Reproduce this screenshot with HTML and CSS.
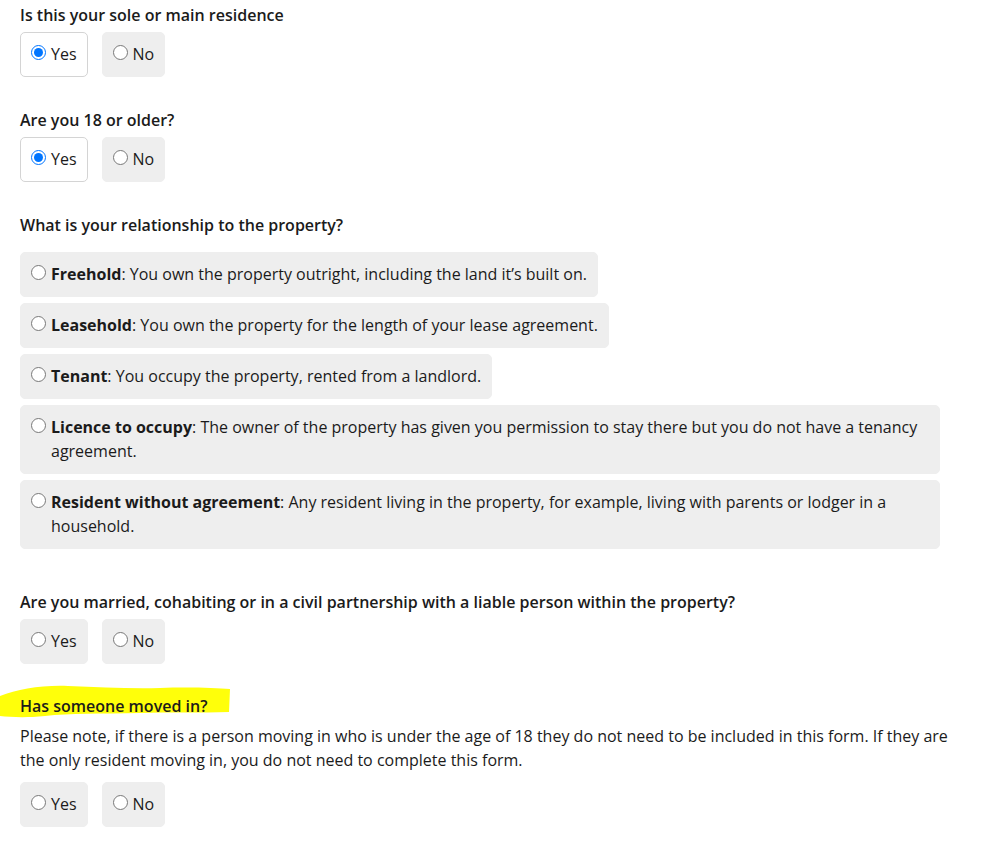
FILE: index.html
```html
<!DOCTYPE html>
<html lang="en">
<head>
    <meta charset="UTF-8">
    <meta name="viewport" content="width=device-width, initial-scale=1.0">
    <title>Resident details</title>
    <link rel="stylesheet" href="styles.css">
</head>
<body>
<form class="page">

    <!-- sole residence -->
    <fieldset class="question">
        <legend class="question-title">Is this your sole or main residence</legend>
        <div class="choices">
            <label class="choice selected"><input type="radio" name="sole" checked><span>Yes</span></label>
            <label class="choice"><input type="radio" name="sole"><span>No</span></label>
        </div>
    </fieldset>

    <!-- age -->
    <fieldset class="question">
        <legend class="question-title">Are you 18 or older?</legend>
        <div class="choices">
            <label class="choice selected"><input type="radio" name="age" checked><span>Yes</span></label>
            <label class="choice"><input type="radio" name="age"><span>No</span></label>
        </div>
    </fieldset>

    <!-- relationship -->
    <fieldset class="question">
        <legend class="question-title">What is your relationship to the property?</legend>
        <div class="options">
            <label class="choice"><input type="radio" name="rel"><span><b>Freehold</b>: You own the property outright, including the land it’s built on.</span></label>
            <label class="choice"><input type="radio" name="rel"><span><b>Leasehold</b>: You own the property for the length of your lease agreement.</span></label>
            <label class="choice"><input type="radio" name="rel"><span><b>Tenant</b>: You occupy the property, rented from a landlord.</span></label>
            <label class="choice"><input type="radio" name="rel"><span><b>Licence to occupy</b>: The owner of the property has given you permission to stay there but you do not have a tenancy agreement.</span></label>
            <label class="choice"><input type="radio" name="rel"><span><b>Resident without agreement</b>: Any resident living in the property, for example, living with parents or lodger in a household.</span></label>
        </div>
    </fieldset>

    <!-- partner -->
    <fieldset class="question partner">
        <legend class="question-title">Are you married, cohabiting or in a civil partnership with a liable person within the property?</legend>
        <div class="choices">
            <label class="choice"><input type="radio" name="partner"><span>Yes</span></label>
            <label class="choice"><input type="radio" name="partner"><span>No</span></label>
        </div>
    </fieldset>

    <!-- moved in -->
    <fieldset class="question moved">
        <legend class="question-title marked">
            <svg class="marker" width="232" height="36" viewBox="0 0 232 36" aria-hidden="true">
                <path d="M0 11 C 18 4, 42 0, 68 1 C 100 2, 130 4, 160 3 C 190 2, 215 3, 230 4 L 229 27 C 200 28, 170 27, 140 28 C 100 29, 70 28, 45 31 C 25 33, 10 32, 0 31 Z" fill="#ffff0a"/>
            </svg>
            <span>Has someone moved in?</span>
        </legend>
        <p class="note">Please note, if there is a person moving in who is under the age of 18 they do not need to be included in this form. If they are the only resident moving in, you do not need to complete this form.</p>
        <div class="choices">
            <label class="choice"><input type="radio" name="moved"><span>Yes</span></label>
            <label class="choice"><input type="radio" name="moved"><span>No</span></label>
        </div>
    </fieldset>

</form>
</body>
</html>
```

FILE: styles.css
```css
body {
    margin: 0;
    padding: 0;
    background-color: #fff;
    color: #1b1b1b;
    font-family: "Open Sans", "Liberation Sans", sans-serif;
    font-size: 16px;
    line-height: 24px;
}
.page {
    width: 944px;
    padding: 3px 20px 20px 20px;
}
/* each question block */
.question {
    border: 0;
    margin: 0 0 31px 0;
    padding: 0;
    min-width: 0;
}
.question-title {
    padding: 0;
    font-weight: 600;
    float: left;
    width: 100%;
}
.question-title + * {
    clear: both;
}
/* yes / no pairs */
.choices {
    display: flex;
    gap: 14px;
    padding-top: 5px;
}
.choice {
    display: grid;
    grid-template-columns: 15px 1fr;
    column-gap: 5px;
    align-items: start;
    padding: 9px 10px 10px 10px;
    background-color: #eee;
    border: 1px solid #eee;
    border-radius: 5px;
    cursor: pointer;
}
.choice input {
    width: 15px;
    height: 15px;
    margin: 3px 0 0 0;
}
.choice.selected {
    background-color: #fff;
    border-color: #d4d4d4;
}
.choice b {
    font-weight: 700;
}
/* relationship list */
.options {
    display: flex;
    flex-direction: column;
    align-items: flex-start;
    gap: 6px;
    max-width: 920px;
    padding-top: 15px;
}
.question.partner {
    margin-top: 41px;
    margin-bottom: 30px;
}
/* highlighted heading */
.marked {
    position: relative;
}
.marked span {
    position: relative;
}
.marker {
    position: absolute;
    left: -20px;
    top: -9px;
}
.note {
    margin: 0;
    padding-top: 6px;
}
.moved .choices {
    padding-top: 10px;
}
```
